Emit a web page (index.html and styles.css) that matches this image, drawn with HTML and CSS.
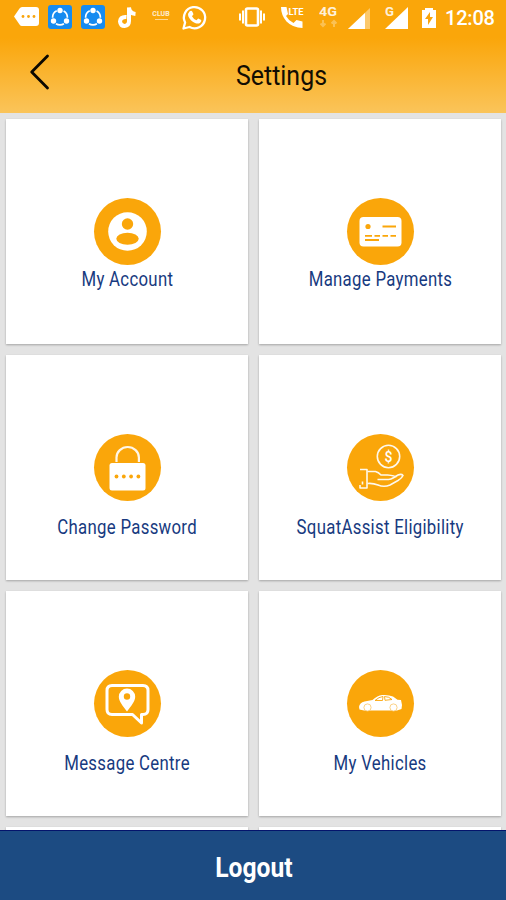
FILE: index.html
```html
<!DOCTYPE html>
<html lang="en">
<head>
<meta charset="utf-8">
<title>Settings</title>
<link rel="stylesheet" href="styles.css">
</head>
<body>
<div class="app">
  <header class="header">
    <div class="status">
      <svg class="s-msg" width="25" height="20" viewBox="0 0 25 20"><path fill="#fff" d="M8 0h14q3 0 3 3v13q0 3-3 3H8q-1.500 0-2.500-1.500L0 9.500 5.500 1.500Q6.500 0 8 0z"/><g fill="#f9a50c"><circle cx="9" cy="9.500" r="1.400"/><circle cx="14.500" cy="9.500" r="1.400"/><circle cx="20" cy="9.500" r="1.400"/></g></svg>
      <svg class="s-share" width="24" height="24" viewBox="0 0 24 24"><rect width="24" height="24" rx="3" fill="#168bf0"/><circle cx="12" cy="12.500" r="7.400" fill="none" stroke="#fff" stroke-width="1.700" stroke-dasharray="8.400 7.100" stroke-dashoffset="-7.400"/><g fill="#fff"><circle cx="12" cy="5.500" r="2.700"/><circle cx="5.500" cy="16" r="2.700"/><circle cx="18.500" cy="16" r="2.700"/></g></svg>
      <svg class="s-share2" width="24" height="24" viewBox="0 0 24 24"><rect width="24" height="24" rx="3" fill="#168bf0"/><circle cx="12" cy="12.500" r="7.400" fill="none" stroke="#fff" stroke-width="1.700" stroke-dasharray="8.400 7.100" stroke-dashoffset="-7.400"/><g fill="#fff"><circle cx="12" cy="5.500" r="2.700"/><circle cx="5.500" cy="16" r="2.700"/><circle cx="18.500" cy="16" r="2.700"/></g></svg>
      <svg class="s-tik" width="18" height="21" viewBox="0 0 18 21"><path fill="none" stroke="#fff" stroke-width="4" d="M8.500 10Q2.500 9.500 2 14.500q.5 4.500 4.500 4.500 4.500-.5 4.500-5V0.500q.5 6 6.500 6.500"/></svg>
      <span class="club"><span class="club-name">CLUB</span><span class="club-line"></span></span>
      <svg class="s-wa" width="25" height="25" viewBox="0 0 25 25"><path fill="none" stroke="#fff" stroke-width="2.300" stroke-linejoin="round" d="M1.500 23.500l1.600-6A10.600 10.600 0 1 1 7.500 22z"/><path fill="#fff" d="M7.500 6.500q2-1.500 3 .5l1 2.200-1.500 2q1.500 3 4.500 4l1.700-1.700 3 1.600q.6 1.300-1 2.600-2 1.600-5.200.2-4.800-2-6.700-6.600-.7-3 1.200-4.800z"/></svg>
      <svg class="s-vib" width="26" height="20" viewBox="0 0 26 20"><rect x="7" y="1.500" width="12" height="17" rx="1.500" fill="none" stroke="#fff" stroke-width="2.600"/><path stroke="#fff" stroke-width="2" d="M4 3.500v13M1 6.500v7M22 3.500v13M25 6.500v7"/></svg>
      <svg class="s-call" width="23" height="23" viewBox="0 0 23 23"><path fill="#fff" d="M0 1h5.500l1.500 7-2 2q2.500 4.500 7.500 7l3-3 6 1.500v6.500Q12 22 5.500 15.500 0 9 0 1z"/><text class="lte" x="7.500" y="8.500" textLength="15" lengthAdjust="spacingAndGlyphs">LTE</text></svg>
      <svg class="s-4g" width="20" height="24" viewBox="0 0 20 24"><text class="net" x="0" y="11" textLength="18" lengthAdjust="spacingAndGlyphs">4G</text><path opacity=".3" fill="none" stroke="#fff" stroke-width="2" d="M4 15v6M1.500 18.500L4 21l2.500-2.500M15 22v-6M12.500 18.500L15 16l2.500 2.500"/></svg>
      <svg class="s-sig" width="23" height="23" viewBox="0 0 23 23"><path fill="#fff" opacity=".4" d="M22 1v21H0z"/><path fill="#fff" d="M17 6v16H0z"/></svg>
      <svg class="s-gsig" width="24" height="24" viewBox="0 0 24 24"><path fill="#fff" d="M23 1v22H0z"/><text class="net" x="0" y="10" textLength="9" lengthAdjust="spacingAndGlyphs">G</text></svg>
      <svg class="s-bat" width="14" height="20" viewBox="0 0 14 20"><path fill="#fff" d="M3 0h8v2h3v18H0V2h3z"/><path fill="#f9a50c" d="M8 4v5h3L6 17v-6H3z"/></svg>
      <span class="time">12:08</span>
    </div>
    <div class="titlebar">
      <svg class="back" width="20" height="36" viewBox="0 0 20 36"><path fill="none" stroke="#0b0800" stroke-width="2.800" stroke-linecap="round" stroke-linejoin="round" d="M17.500 2L1.700 18l15.800 16"/></svg>
      <h1 class="title">Settings</h1>
    </div>
  </header>
  <main class="grid">
    <section class="card near">
      <svg class="icon" viewBox="0 0 67 67"><circle class="disc" cx="33.500" cy="33.500" r="33.500"/><circle cx="33.500" cy="33.500" r="19.300" fill="#fff"/><circle cx="33.500" cy="26" r="5.700" fill="#faa60a"/><ellipse cx="33.500" cy="40.800" rx="11.200" ry="6" fill="#faa60a"/></svg>
      <span class="label">My Account</span>
    </section>
    <section class="card near">
      <svg class="icon" viewBox="0 0 67 67"><circle class="disc" cx="33.500" cy="33.500" r="33.500"/><rect x="12.500" y="19" width="42" height="29.500" rx="4" fill="#fff"/><circle cx="21" cy="28.500" r="2.600" fill="#faa60a"/><path stroke="#faa60a" stroke-width="1.800" d="M35.500 28.500H49M18 37.800h7M27.500 37.800H33M35.500 37.800H41M43.500 37.800H49M18 42h14"/></svg>
      <span class="label">Manage Payments</span>
    </section>
    <section class="card">
      <svg class="icon" viewBox="0 0 67 67"><circle class="disc" cx="33.500" cy="33.500" r="33.500"/><path fill="none" stroke="#fff" stroke-width="2.200" d="M22.500 28v-4.500a11.200 10.500 0 0 1 22.400 0V28" opacity=".9"/><rect x="15.500" y="29" width="36" height="27.500" rx="2.500" fill="#fff"/><g fill="#faa60a"><circle cx="22.500" cy="42.500" r="1.900"/><circle cx="29.800" cy="42.500" r="1.900"/><circle cx="37.100" cy="42.500" r="1.900"/><circle cx="44.400" cy="42.500" r="1.900"/></g></svg>
      <span class="label">Change Password</span>
    </section>
    <section class="card">
      <svg class="icon" viewBox="0 0 67 67"><circle class="disc" cx="33.500" cy="33.500" r="33.500"/><g fill="none" stroke="#fff" stroke-width="1.600" stroke-linejoin="round" opacity=".93"><circle cx="41.500" cy="22.500" r="11.200"/><path d="M13 35.500h7v18.500h-7v-3M15.500 47.500v3"/><path d="M20.500 37.500h8q3 .8 5.500 3.500h6.500q7.500.5 8.500 2.500M30.500 45.500h11q2.500-.3 5-1.800l4.500-2.700q3.500-1.500 5 .5-1 2.500-5 5l-8 4.500q-6 2.500-12 0-5-2-10.500-1.500"/></g><text class="dollar" x="41.500" y="27.500">$</text></svg>
      <span class="label">SquatAssist Eligibility</span>
    </section>
    <section class="card">
      <svg class="icon" viewBox="0 0 67 67"><circle class="disc" cx="33.500" cy="33.500" r="33.500"/><path fill="none" stroke="#fff" stroke-width="3" stroke-linejoin="round" d="M18 15.500h31q5 0 5 5v19q0 5-5 5h-1.500v8.500l-9-8.500H18q-5 0-5-5v-19q0-5 5-5z"/><path fill="#fff" fill-rule="evenodd" d="M33 18.500a8.200 8.200 0 0 1 8.200 8.200c0 5-4.200 9-8.200 14.800-4-5.800-8.200-9.800-8.200-14.800A8.200 8.200 0 0 1 33 18.500zm0 4.800a3.200 3.200 0 1 0 0 6.400 3.200 3.200 0 0 0 0-6.400z"/></svg>
      <span class="label">Message Centre</span>
    </section>
    <section class="card">
      <svg class="icon" viewBox="0 0 67 67"><circle class="disc" cx="33.500" cy="33.500" r="33.500"/><path fill="#fff" d="M12 37q.5-4.500 5.500-5.500l8-1.500q5-4.500 9.500-5 6.500-.5 11 1.500l4.500 3.200 3.500.3 1 5-.5 4-4.500 1.500H17l-4.500-1z"/><path fill="none" stroke="#faa60a" stroke-width=".9" d="M28 30.500q4-3.700 8-4l-.5 4zM37.500 26.500q4.500 0 7.500 3l-7 .8z"/><g fill="#fff" stroke="#fac66a" stroke-width=".8"><circle cx="20.500" cy="37.500" r="3.600"/><circle cx="46.500" cy="37.500" r="3.600"/></g></svg>
      <span class="label">My Vehicles</span>
    </section>
    <section class="card"></section>
    <section class="card"></section>
  </main>
  <footer class="logout"><span class="logout-text">Logout</span></footer>
</div>
</body>
</html>
```
FILE: styles.css
```css
* { box-sizing: border-box; }
body { margin: 0; font-family: Roboto, "Liberation Sans", sans-serif; }
svg { display: block; flex: none; overflow: visible; }
.app { width: 506px; height: 900px; display: flex; flex-direction: column; overflow: hidden; background: #e3e3e3; }

.header { flex: none; height: 113px; background: linear-gradient(#faa60a 0, #faa60a 38px, #fac45a 113px); }
.status { height: 34px; display: flex; align-items: center; padding-left: 14px; color: #fff; }
.s-msg { margin-right: 9px; }
.s-share { margin-right: 9px; }
.s-share2 { margin-right: 13px; }
.s-tik { margin-right: 15px; }
.club { width: 20px; display: flex; flex-direction: column; align-items: center; margin: -4px 11px 0 0; opacity: .8; }
.club-name { font-size: 7px; line-height: 8px; font-weight: 700; }
.club-line { width: 13px; height: 1px; margin-top: 1px; background: #fff; opacity: .7; }
.s-wa { margin-right: 32px; }
.s-vib { margin-right: 16px; }
.s-call { margin-right: 15px; }
.lte { font-size: 9px; font-weight: 700; fill: #fff; }
.net { font-size: 13px; font-weight: 700; fill: #fff; opacity: .85; }
.s-4g { margin-right: 9px; }
.s-sig { margin: 2px 14px 0 0; }
.s-gsig { margin: 2px 13px 0 0; }
.s-bat { margin: 2px 9px 0 0; }
.time { font-size: 20px; font-weight: 500; line-height: 36px; margin-top: 2px; letter-spacing: -.2px; }

.titlebar { height: 79px; display: grid; grid-template-columns: 57px 1fr; align-items: start; }
.back { margin: 20px 0 0 30px; }
.title { margin: 25px 0 0; text-align: center; font-size: 28px; line-height: 34px; font-weight: 400; color: #120d02; transform: scaleX(.89); }

.grid { flex: 1; min-height: 0; overflow: hidden; padding: 6px 5px 0 6px; display: grid; grid-template-columns: 242px 242px; grid-auto-rows: 225px; gap: 11px; align-content: start; }
.card { background: #fff; box-shadow: 0 1px 2px rgba(0, 0, 0, .28); display: flex; flex-direction: column; align-items: center; padding-top: 79px; }
.icon { width: 67px; height: 67px; }
.disc { fill: #faa60a; }
.dollar { font-size: 14px; font-weight: 500; fill: #fff; text-anchor: middle; }
.label { margin-top: 15px; font-size: 19.5px; line-height: 24px; letter-spacing: .35px; color: #173a80; white-space: nowrap; transform: scaleX(.86); }
.near .label { margin-top: 3px; }

.logout { flex: none; height: 70px; display: flex; align-items: center; justify-content: center; background: #1c4b82; border-top: 1px solid #04146c; color: #fff; }
.logout-text { font-size: 28px; line-height: 34px; margin: 4px 0 0 2px; font-weight: 700; transform: scaleX(.88); }
```
